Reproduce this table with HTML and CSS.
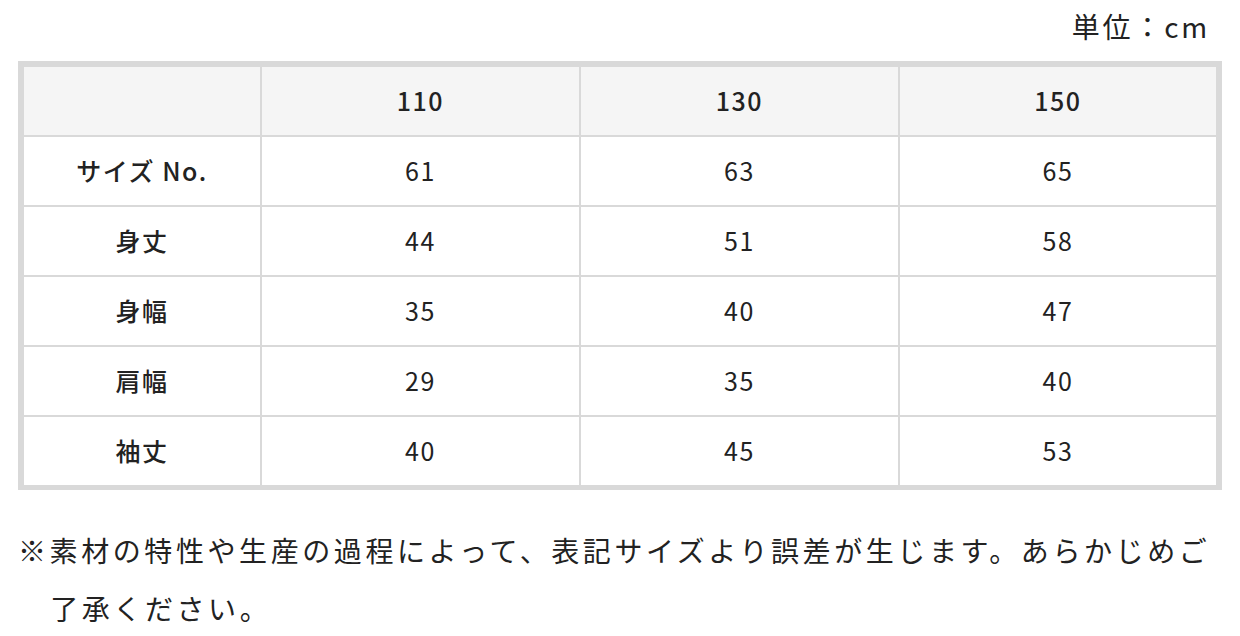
FILE: index.html
```html
<!DOCTYPE html>
<html lang="ja">
<head>
<meta charset="utf-8">
<title>サイズ表</title>
<link rel="stylesheet" href="styles.css">
</head>
<body>
<div class="wrap">
  <p class="unit">単位：cm</p>
  <div class="size-table" role="table">
    <div class="cell head" role="columnheader"></div>
    <div class="cell head num" role="columnheader">110</div>
    <div class="cell head num" role="columnheader">130</div>
    <div class="cell head num" role="columnheader">150</div>

    <div class="cell label" role="rowheader">サイズ No.</div>
    <div class="cell" role="cell">61</div>
    <div class="cell" role="cell">63</div>
    <div class="cell" role="cell">65</div>

    <div class="cell label" role="rowheader">身丈</div>
    <div class="cell" role="cell">44</div>
    <div class="cell" role="cell">51</div>
    <div class="cell" role="cell">58</div>

    <div class="cell label" role="rowheader">身幅</div>
    <div class="cell" role="cell">35</div>
    <div class="cell" role="cell">40</div>
    <div class="cell" role="cell">47</div>

    <div class="cell label" role="rowheader">肩幅</div>
    <div class="cell" role="cell">29</div>
    <div class="cell" role="cell">35</div>
    <div class="cell" role="cell">40</div>

    <div class="cell label" role="rowheader">袖丈</div>
    <div class="cell" role="cell">40</div>
    <div class="cell" role="cell">45</div>
    <div class="cell" role="cell">53</div>
  </div>
  <p class="note">※素材の特性や生産の過程によって、表記サイズより誤差が生じます。あらかじめご了承ください。</p>
</div>
</body>
</html>
```

FILE: styles.css
```css
html, body {
  margin: 0;
  padding: 0;
  background: #fff;
}

body {
  font-family: "Noto Sans CJK JP", "Noto Sans", sans-serif;
  color: #222;
}

.wrap {
  padding: 0 18px;
}

.unit {
  margin: 0;
  height: 61px;
  line-height: 52px;
  text-align: right;
  padding-right: 12px;
  font-size: 28px;
  letter-spacing: 0.1em;
}

.size-table {
  display: grid;
  grid-template-columns: 236px 317px 317px 1fr;
  grid-auto-rows: 68px;
  gap: 2px;
  background: #d9d9d9;
  border: 6px solid #d9d9d9;
  height: 417px;
  box-sizing: content-box;
}

.cell {
  background: #fff;
  display: flex;
  align-items: center;
  justify-content: center;
  padding-bottom: 2px;
  font-size: 25px;
  letter-spacing: 0.06em;
}

.cell.head {
  background: #f5f5f5;
  font-weight: 500;
}

.cell.label {
  font-weight: 500;
}

.note {
  margin: 31px 0 0;
  padding-left: 1.15em;
  text-indent: -1.15em;
  font-size: 28px;
  line-height: 58px;
  letter-spacing: 0.128em;
}
```
